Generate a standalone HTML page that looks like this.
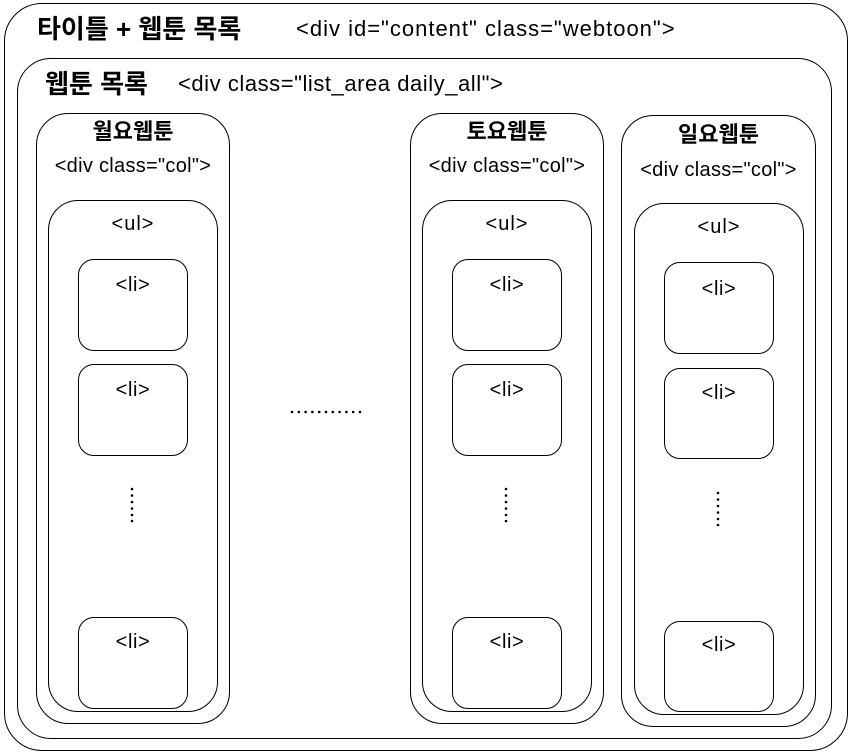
<!DOCTYPE html>
<html><head><meta charset="utf-8"><style>
body{margin:0;width:849px;height:752px;background:#fff;position:relative;overflow:hidden;font-family:"Liberation Sans","Noto Sans CJK KR",sans-serif;color:#000}
.b{position:absolute;border:1.5px solid #000;box-sizing:border-box;background:transparent}
.t{position:absolute;white-space:nowrap;line-height:1}
.c{text-align:center}
.h{font-size:22px;font-weight:bold}
.d{font-size:20px;letter-spacing:0.3px}
.u{font-size:20px;letter-spacing:1px}
.l{font-size:20px;letter-spacing:0.6px}
</style></head><body>
<div class="b" style="left:4px;top:3px;width:844px;height:748px;border-radius:38px"></div>
<div class="t" style="left:37px;top:16px;font-size:26px;font-weight:bold">타이틀 + 웹툰 목록</div>
<div class="t" style="left:296px;top:18px;font-size:22px;letter-spacing:1px">&lt;div id="content" class="webtoon"&gt;</div>
<div class="b" style="left:17px;top:58px;width:815px;height:681px;border-radius:34px"></div>
<div class="t" style="left:45px;top:71px;font-size:26px;font-weight:bold">웹툰 목록</div>
<div class="t" style="left:178px;top:73px;font-size:22px;letter-spacing:0.55px">&lt;div class="list_area daily_all"&gt;</div>

<!-- col1 -->
<div class="b" style="left:36px;top:113px;width:194px;height:611px;border-radius:32px"></div>
<div class="t c h" style="left:36px;width:194px;top:121px">월요웹툰</div>
<div class="t c d" style="left:36px;width:194px;top:156px">&lt;div class="col"&gt;</div>
<div class="b" style="left:48px;top:200px;width:170px;height:512px;border-radius:30px"></div>
<div class="t c u" style="left:48px;width:170px;top:214px">&lt;ul&gt;</div>
<div class="b" style="left:78px;top:259px;width:110px;height:92px;border-radius:16px"></div>
<div class="t c l" style="left:78px;width:110px;top:275px">&lt;li&gt;</div>
<div class="b" style="left:78px;top:364px;width:110px;height:92px;border-radius:16px"></div>
<div class="t c l" style="left:78px;width:110px;top:380px">&lt;li&gt;</div>
<div class="b" style="left:78px;top:617px;width:110px;height:92px;border-radius:16px"></div>
<div class="t c l" style="left:78px;width:110px;top:632px">&lt;li&gt;</div>

<!-- col2 -->
<div class="b" style="left:410px;top:113px;width:194px;height:611px;border-radius:32px"></div>
<div class="t c h" style="left:410px;width:194px;top:121px">토요웹툰</div>
<div class="t c d" style="left:410px;width:194px;top:156px">&lt;div class="col"&gt;</div>
<div class="b" style="left:422px;top:200px;width:170px;height:512px;border-radius:30px"></div>
<div class="t c u" style="left:422px;width:170px;top:214px">&lt;ul&gt;</div>
<div class="b" style="left:452px;top:259px;width:110px;height:92px;border-radius:16px"></div>
<div class="t c l" style="left:452px;width:110px;top:275px">&lt;li&gt;</div>
<div class="b" style="left:452px;top:364px;width:110px;height:92px;border-radius:16px"></div>
<div class="t c l" style="left:452px;width:110px;top:380px">&lt;li&gt;</div>
<div class="b" style="left:452px;top:617px;width:110px;height:92px;border-radius:16px"></div>
<div class="t c l" style="left:452px;width:110px;top:632px">&lt;li&gt;</div>

<!-- col3 -->
<div class="b" style="left:621px;top:115px;width:195px;height:612px;border-radius:32px"></div>
<div class="t c h" style="left:621px;width:195px;top:124px">일요웹툰</div>
<div class="t c d" style="left:621px;width:195px;top:160px">&lt;div class="col"&gt;</div>
<div class="b" style="left:634px;top:203px;width:170px;height:512px;border-radius:30px"></div>
<div class="t c u" style="left:634px;width:170px;top:217px">&lt;ul&gt;</div>
<div class="b" style="left:664px;top:262px;width:110px;height:92px;border-radius:16px"></div>
<div class="t c l" style="left:664px;width:110px;top:279px">&lt;li&gt;</div>
<div class="b" style="left:664px;top:368px;width:110px;height:91px;border-radius:16px"></div>
<div class="t c l" style="left:664px;width:110px;top:383px">&lt;li&gt;</div>
<div class="b" style="left:664px;top:621px;width:110px;height:91px;border-radius:16px"></div>
<div class="t c l" style="left:664px;width:110px;top:635px">&lt;li&gt;</div>

<svg style="position:absolute;left:0;top:0" width="849" height="752">
<g fill="#000">
<circle cx="292" cy="412" r="1.3"/><circle cx="298.8" cy="412" r="1.3"/><circle cx="305.6" cy="412" r="1.3"/><circle cx="312.4" cy="412" r="1.3"/><circle cx="319.2" cy="412" r="1.3"/><circle cx="326" cy="412" r="1.3"/><circle cx="332.8" cy="412" r="1.3"/><circle cx="339.6" cy="412" r="1.3"/><circle cx="346.4" cy="412" r="1.3"/><circle cx="353.2" cy="412" r="1.3"/><circle cx="360" cy="412" r="1.3"/>
<circle cx="132" cy="489" r="1.3"/><circle cx="132" cy="495.5" r="1.3"/><circle cx="132" cy="502" r="1.3"/><circle cx="132" cy="508.5" r="1.3"/><circle cx="132" cy="515" r="1.3"/><circle cx="132" cy="521" r="1.3"/>
<circle cx="506" cy="489" r="1.3"/><circle cx="506" cy="495.5" r="1.3"/><circle cx="506" cy="502" r="1.3"/><circle cx="506" cy="508.5" r="1.3"/><circle cx="506" cy="515" r="1.3"/><circle cx="506" cy="521" r="1.3"/>
<circle cx="718" cy="493" r="1.3"/><circle cx="718" cy="499.5" r="1.3"/><circle cx="718" cy="506" r="1.3"/><circle cx="718" cy="512.5" r="1.3"/><circle cx="718" cy="519" r="1.3"/><circle cx="718" cy="525" r="1.3"/>
</g></svg>
</body></html>
